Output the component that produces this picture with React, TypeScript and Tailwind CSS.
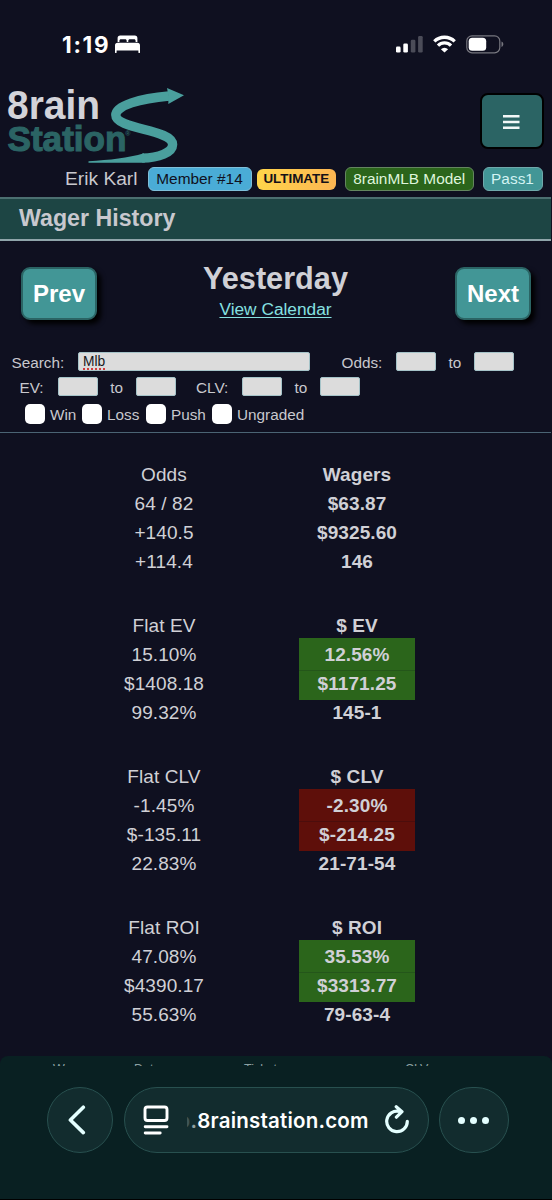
import React from "react";
import clsx from "clsx";

type Tone = "win" | "lose" | null;

type StatColumn = {
  title: string;
  rows: string[];
  tone?: Tone;
};

const STATS: { flat: StatColumn; dollar: StatColumn }[] = [
  {
    flat: { title: "Odds", rows: ["64 / 82", "+140.5", "+114.4"] },
    dollar: { title: "Wagers", rows: ["$63.87", "$9325.60", "146"] },
  },
  {
    flat: { title: "Flat EV", rows: ["15.10%", "$1408.18", "99.32%"] },
    dollar: {
      title: "$ EV",
      rows: ["12.56%", "$1171.25", "145-1"],
      tone: "win",
    },
  },
  {
    flat: { title: "Flat CLV", rows: ["-1.45%", "$-135.11", "22.83%"] },
    dollar: {
      title: "$ CLV",
      rows: ["-2.30%", "$-214.25", "21-71-54"],
      tone: "lose",
    },
  },
  {
    flat: { title: "Flat ROI", rows: ["47.08%", "$4390.17", "55.63%"] },
    dollar: {
      title: "$ ROI",
      rows: ["35.53%", "$3313.77", "79-63-4"],
      tone: "win",
    },
  },
];

function StatusBar() {
  return (
    <div className="flex h-[84px] shrink-0 items-start pt-[35px] pl-[62px] text-white">
      <span className="w-[53px] font-[Inter] text-[22.5px] leading-[20px] font-bold tracking-[1.7px]">
        1:19
      </span>
      <svg width="25" height="18" viewBox="0 0 25 18" fill="currentColor">
        <path d="M2.6 7V3.2C2.6 1.4 3.5.6 5.2.6h14.6c1.7 0 2.6.8 2.6 2.6V7h-1.8V5.9c0-1-.6-1.6-1.6-1.6h-4.1c-1 0-1.6.6-1.6 1.6V7h-1.6V5.9c0-1-.6-1.6-1.6-1.6H6c-1 0-1.6.6-1.6 1.6V7zM0 10.4C0 8.7 1 7.7 2.6 7.7h19.8c1.6 0 2.6 1 2.6 2.7v7c0 .4-.3.7-.8.7s-.8-.3-.8-.7v-2H1.6v2c0 .4-.3.7-.8.7s-.8-.3-.8-.7z" />
      </svg>
      <svg
        className="ml-[256px]"
        width="27"
        height="18"
        viewBox="0 0 27 18"
        fill="currentColor"
      >
        <rect x="0" y="11.6" width="4.6" height="6" rx="1.3" />
        <rect x="7.3" y="8.4" width="4.6" height="9.2" rx="1.3" />
        <rect x="14.8" y="4.8" width="4.6" height="12.8" rx="1.3" opacity=".25" />
        <rect x="22.1" y="1" width="4.6" height="16.6" rx="1.3" opacity=".25" />
      </svg>
      <svg
        className="ml-[10px]"
        width="23"
        height="18"
        viewBox="0 0 23 18"
        fill="none"
        stroke="currentColor"
        strokeWidth="3.3"
      >
        <path d="M1.3 6.4a14.6 14.6 0 0 1 20.4 0" />
        <path d="M5 10.6a9.2 9.2 0 0 1 13 0" />
        <path
          d="M11.5 17.6 7.9 14.2a5 5 0 0 1 7.2 0z"
          fill="currentColor"
          stroke="none"
        />
      </svg>
      <svg
        className="ml-[10px]"
        width="38"
        height="19"
        viewBox="0 0 38 19"
        fill="none"
      >
        <rect x=".8" y=".8" width="33" height="17" rx="5.2" stroke="#77777f" strokeWidth="1.2" />
        <rect x="2.7" y="2.8" width="17.5" height="13" rx="3.5" fill="#fff" />
        <path d="M35.5 6.5v5.4c1.2-.5 1.8-1.5 1.8-2.7s-.6-2.2-1.800-2.7z" fill="#77777f" />
      </svg>
    </div>
  );
}

function Logo() {
  return (
    <svg width="190" height="82" viewBox="0 84 190 82" className="shrink-0">
      <g fontFamily="Liberation Sans, Arial, sans-serif" fontWeight="700">
        <text x="7" y="118.5" fontSize="41" fill="#d3d3d9" textLength="93" lengthAdjust="spacingAndGlyphs">
          8rain
        </text>
        <text
          x="7.5"
          y="151.2"
          fontSize="34.5"
          fill="#2b6464"
          stroke="#2b6464"
          strokeWidth="1.1"
          textLength="119"
          lengthAdjust="spacingAndGlyphs"
        >
          Station
        </text>
        <text x="125.2" y="135.5" fontSize="7" fill="#2b6464">
          ®
        </text>
      </g>
      <path
        d="M169 96C140 98.500 115.800 105.500 115.800 115c0 14.500 56.800 14 56.800 29.500 0 8-14 13.500-30.400 13.600"
        fill="none"
        stroke="#4a9f9d"
        strokeWidth="9.4"
      />
      <path
        d="M184 95.3 167 88l1.5 8-.2 8zM88.500 161.300C110 160 128 158 144 153.300l1 9.200c-2 .3-4 .3-6 .3H88.500z"
        fill="#4a9f9d"
      />
    </svg>
  );
}

function Header() {
  return (
    <header className="shrink-0">
      <div className="flex h-[82px] items-start justify-between pr-[8px]">
        <Logo />
        <button className="mt-[9px] flex h-[56px] w-[64px] items-center justify-center rounded-lg border-2 border-black bg-[#2b6464]">
          <svg width="17" height="15" viewBox="0 0 17 15" fill="#f3f7f7" className="mt-[3px] mr-[2px]">
            <path d="M0 0h16.500v2.400H0zM0 5.800h16.500v2.400H0zM0 11.600h16.500v2.400H0z" />
          </svg>
        </button>
      </div>
      <div className="flex h-[31px] items-start pl-[65px] text-[15.4px] leading-[22px]">
        <span className="mt-[2px] w-[82.5px] text-[19.2px] text-[#c8c8ce]">Erik Karl</span>
        <span className="mt-px flex h-6 w-[104px] justify-center rounded-md border border-[#7fbfd9] bg-[#4aacd6] text-[#101020]">
          Member #14
        </span>
        <span className="mt-[3px] ml-[5px] flex h-[21px] w-[79.5px] justify-center rounded-md bg-linear-to-r from-[#ffd54a] to-[#fcb552] text-[13.4px] leading-[20px] font-bold text-[#141018]">
          ULTIMATE
        </span>
        <span className="mt-px ml-[8.5px] flex h-6 w-[129.5px] justify-center rounded-md border border-[#64865f] bg-[#2b651b] leading-[21px] text-[#dff5dc]">
          8rainMLB Model
        </span>
        <span className="mt-px ml-[8.5px] flex h-6 w-[60px] justify-center rounded-md border border-[#6fa9ab] bg-[#429696] leading-[21px] text-[#d2f3f3]">
          Pass1
        </span>
      </div>
    </header>
  );
}

function NavButton({ children }: { children: React.ReactNode }) {
  return (
    <button className="h-[53px] w-[76px] rounded-[9px] border-2 border-[#2b6464] bg-[#429696] text-2xl leading-6 font-bold text-white shadow-[4px_4px_5px_#000]">
      {children}
    </button>
  );
}

function Box() {
  return (
    <span className="mt-px h-[19px] w-[40px] shrink-0 rounded-xs border border-[#a5c3c8] bg-[#dcdcdc]" />
  );
}

function Check({ label, className }: { label: string; className: string }) {
  return (
    <label className={clsx("flex items-center", className)}>
      <span className="mr-[5px] h-5 w-5 shrink-0 rounded-[5px] bg-white" />
      <span className="pt-[3px]">{label}</span>
    </label>
  );
}

function Filters() {
  return (
    <div className="mr-px h-[92px] shrink-0 border-b border-[#4b6474] pt-[10px] text-[15.3px] leading-5 text-[#c8c8ce]">
      <div className="flex h-[25px] items-start pl-[11.5px]">
        <span className="w-[66.5px] pt-[2px]">Search:</span>
        <span className="mt-px h-[19px] w-[232px] rounded-xs border border-[#a5c3c8] bg-[#dcdcdc] pl-[4px] text-[13.8px] leading-[17px] text-[#181820]">
          <span className="underline decoration-[#d33c3c] decoration-dotted decoration-[1.5px] underline-offset-[2px]">
            Mlb
          </span>
        </span>
        <span className="ml-[31.5px] w-[54.5px] pt-[2px]">Odds:</span>
        <Box />
        <span className="w-[38px] pt-[2px] text-center">to</span>
        <Box />
      </div>
      <div className="flex h-[25px] items-start pl-[19.5px]">
        <span className="w-[38px] pt-[2px]">EV:</span>
        <Box />
        <span className="w-[38.5px] pt-[2px] text-center">to</span>
        <Box />
        <span className="ml-[20px] w-[46px] pt-[2px]">CLV:</span>
        <Box />
        <span className="w-[38px] pt-[2px] text-center">to</span>
        <Box />
      </div>
      <div className="flex pt-px pl-[25px]">
        <Check label="Win" className="w-[57px]" />
        <Check label="Loss" className="w-[64px]" />
        <Check label="Push" className="w-[66px]" />
        <Check label="Ungraded" className="w-[100px]" />
      </div>
    </div>
  );
}

const toneRows = {
  win: [
    "-mt-[2px] h-[33px] border-b border-[#24561a] bg-[#2b651b] pt-[2px]",
    "h-[29px] bg-[#2b651b] leading-[25px]",
    "-mt-[2px] h-[29px]",
  ],
  lose: [
    "-mt-[2px] h-[33px] border-b border-[#4c0d0c] bg-[#5e0f0a] pt-[2px]",
    "h-[29px] bg-[#5e0f0a] leading-[25px]",
    "-mt-[2px] h-[29px]",
  ],
};

function Column({ title, rows, tone, bold }: StatColumn & { bold?: boolean }) {
  return (
    <div className={clsx("w-[116px] text-center", bold && "font-bold")}>
      <div className="h-[29px]">{title}</div>
      {rows.map((row, i) => (
        <div key={row} className={tone ? toneRows[tone][i] : "h-[29px]"}>
          {row}
        </div>
      ))}
    </div>
  );
}

function BottomBar() {
  return (
    <footer className="h-[144px] shrink-0 rounded-t-lg border-b border-black bg-[#092022]">
      <div className="h-[31px] pt-[8px]">
        {/* top edge of the table header scrolling under the toolbar */}
        <div className="flex h-[2px] overflow-hidden text-[12.5px] leading-[10px] text-[#8ba0a2]">
          <span className="ml-[53px] w-[81px]">Wager</span>
          <span className="w-[110px]">Date</span>
          <span className="w-[161px]">Ticket</span>
          <span>CLV</span>
        </div>
      </div>
      <div className="flex h-[66px] pl-[47px] text-white">
        <div className="flex w-[66px] items-center justify-center rounded-full border border-[#28504f] bg-[#122c2e] pr-[6px]">
          <svg width="18" height="30" viewBox="0 0 18 30" fill="none" stroke="#e4ffff" strokeWidth="3.6" strokeLinecap="round" strokeLinejoin="round">
            <path d="M15.3 2.2 2.4 15l12.9 12.6" />
          </svg>
        </div>
        <div className="ml-[10.5px] flex w-[305.5px] items-center rounded-full border border-[#28504f] bg-[#122c2e] pl-[18.5px]">
          <svg width="26" height="30" viewBox="0 0 26 30" fill="none" stroke="#fff" strokeWidth="2.9" strokeLinecap="round" className="shrink-0">
            <rect x="2" y="2" width="22" height="13.5" rx="2.5" />
            <path d="M2.2 21.7h21.8M2.2 28h15" />
          </svg>
          <span className="mt-[2px] ml-[17.5px] flex w-[197.5px] shrink-0 font-[Inter] text-[20.5px] leading-6 font-semibold tracking-[0.2px]">
            <span className="w-[4px] overflow-hidden text-[#3e5557] [direction:rtl]">o</span>
            <span className="text-[#8fa0a1]">.</span>8rainstation.com
          </span>
          <svg width="26" height="30" viewBox="0 0 26 30" fill="none" stroke="#e4ffff" strokeWidth="3.2" strokeLinecap="round" strokeLinejoin="round" className="shrink-0">
            <path d="M15.5 6.4A10.3 10.3 0 1 0 23.3 16.3M12.2 1.7 18 6.6l-5.6 5.6" />
          </svg>
        </div>
        <div className="ml-[10px] flex w-[70px] items-center justify-center gap-[5px] rounded-full border border-[#28504f] bg-[#122c2e] pr-px">
          <span className="h-[7px] w-[7px] rounded-full bg-[#e4ffff]" />
          <span className="h-[7px] w-[7px] rounded-full bg-[#e4ffff]" />
          <span className="h-[7px] w-[7px] rounded-full bg-[#e4ffff]" />
        </div>
      </div>
    </footer>
  );
}

export default function App() {
  return (
    <div className="flex h-[1200px] w-[552px] flex-col overflow-hidden bg-[#0f1020] font-['Liberation_Sans',Arial,sans-serif] text-[#d0d0d6]">
      <StatusBar />
      <Header />
      <div className="mr-px flex h-[44px] shrink-0 items-center border-t-2 border-b-2 border-t-[#4b6f70] border-b-[#8fa5aa] bg-[#1d4544] pb-[3px] pl-[19px] text-[23.2px] leading-7 font-bold text-[#c8c8ce]">
        Wager History
      </div>
      <div className="flex h-[100px] shrink-0 items-start justify-between pr-[21px] pl-[21px]">
        <div className="pt-[26px]">
          <NavButton>Prev</NavButton>
        </div>
        <div className="flex flex-col items-center pt-[20px] pr-px">
          <h1 className="text-[30.7px] leading-9 font-bold">Yesterday</h1>
          <a className="mt-[2px] text-[17.3px] leading-5 text-[#86e0e0] underline decoration-1 underline-offset-2">
            View Calendar
          </a>
        </div>
        <div className="pt-[26px]">
          <NavButton>Next</NavButton>
        </div>
      </div>
      <Filters />
      <main className="flex min-h-0 flex-1 flex-col gap-[35px] overflow-hidden pt-[27px] text-[19px] leading-[29px] tracking-[0.1px]">
        {STATS.map((group) => (
          <div key={group.flat.title} className="flex h-[116px] shrink-0 pl-[106px]">
            <Column {...group.flat} />
            <div className="w-[77px]" />
            <Column {...group.dollar} bold />
          </div>
        ))}
      </main>
      <BottomBar />
    </div>
  );
}
